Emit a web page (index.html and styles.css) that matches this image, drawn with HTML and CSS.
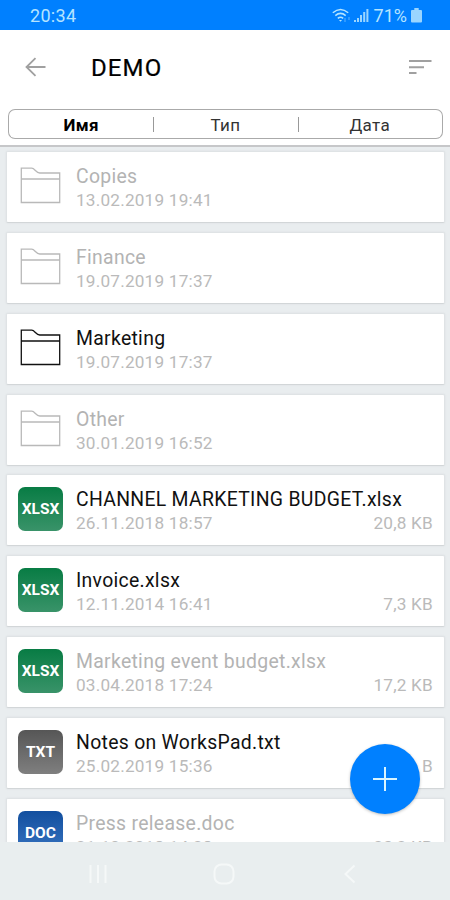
FILE: index.html
```html
<!DOCTYPE html>
<html lang="ru">
<head>
<meta charset="utf-8">
<title>DEMO</title>
<link rel="stylesheet" href="styles.css">
</head>
<body>
<svg width="0" height="0" class="defs"><symbol id="folder" viewBox="0 0 40 37"><path d="M.8 35.500V1.200h10.400c3 0 4.500 4.800 8 4.800h20v29.500zM.8 12h38.400" fill="none" stroke="currentColor" stroke-width="1.300"/></symbol></svg>
<div class="phone">
  <div class="status">
    <span class="time">20:34</span>
    <svg class="wifi" width="19" height="16" viewBox="0 0 19 16" fill="none" stroke="currentColor" stroke-width="1.500"><path d="M.8 4.800q7.700-6.600 15.400 0M3.300 7.600q5.200-4.400 10.400 0M5.800 10.300q2.700-2.200 5.400 0"/><path d="M7 12h3l-1.500 1.800z" fill="currentColor" stroke="none"/><path d="M13 10v4M17 9v3" stroke-width="1" opacity=".5"/></svg>
    <svg class="signal" width="15" height="15" viewBox="0 0 15 15" fill="currentColor"><path d="M0 12h2v2H0zM3 10h2v4H3zM6 7h2v7H6zM9.200 4h2v10h-2zM12.400 1h2v13h-2z" opacity=".85"/></svg>
    <span class="percent">71%</span>
    <svg class="battery" width="11" height="15" viewBox="0 0 11 15" fill="currentColor"><path d="M3.300 0h4.400v2H10q1 0 1 1v10.500q0 1-1 1H1q-1 0-1-1V3q0-1 1-1h2.300z" opacity=".85"/></svg>
  </div>
  <header class="top">
    <svg class="back" width="22" height="20" viewBox="0 0 22 20" fill="none" stroke="currentColor" stroke-width="1.800"><path d="M20.500 10H1.500M10.500 1.200 1.500 10l9 8.800"/></svg>
    <h1>DEMO</h1>
    <svg class="sort" width="23" height="16" viewBox="0 0 23 16" fill="none" stroke="currentColor" stroke-width="2"><path d="M0 2h22.500M0 8.200h15M0 14h7.500"/></svg>
  </header>
  <div class="tabs"><span class="tab active">Имя</span><span class="tab">Тип</span><span class="tab">Дата</span></div>
  <main class="list">
    <div class="card muted"><svg class="folder"><use href="#folder"/></svg><div class="info"><div class="name">Copies</div><div class="meta"><span>13.02.2019 19:41</span></div></div></div>
    <div class="card muted"><svg class="folder"><use href="#folder"/></svg><div class="info"><div class="name">Finance</div><div class="meta"><span>19.07.2019 17:37</span></div></div></div>
    <div class="card"><svg class="folder"><use href="#folder"/></svg><div class="info"><div class="name">Marketing</div><div class="meta"><span>19.07.2019 17:37</span></div></div></div>
    <div class="card muted"><svg class="folder"><use href="#folder"/></svg><div class="info"><div class="name">Other</div><div class="meta"><span>30.01.2019 16:52</span></div></div></div>
    <div class="card"><div class="file xlsx">XLSX</div><div class="info"><div class="name">CHANNEL MARKETING BUDGET.xlsx</div><div class="meta"><span>26.11.2018 18:57</span><span class="size">20,8 KB</span></div></div></div>
    <div class="card"><div class="file xlsx">XLSX</div><div class="info"><div class="name">Invoice.xlsx</div><div class="meta"><span>12.11.2014 16:41</span><span class="size">7,3 KB</span></div></div></div>
    <div class="card muted"><div class="file xlsx">XLSX</div><div class="info"><div class="name">Marketing event budget.xlsx</div><div class="meta"><span>03.04.2018 17:24</span><span class="size">17,2 KB</span></div></div></div>
    <div class="card"><div class="file txt">TXT</div><div class="info"><div class="name">Notes on WorksPad.txt</div><div class="meta"><span>25.02.2019 15:36</span><span class="size">B</span></div></div></div>
    <div class="card muted"><div class="file doc">DOC</div><div class="info"><div class="name">Press release.doc</div><div class="meta"><span>21.10.2018 14:28</span><span class="size">23,2 KB</span></div></div></div>
  </main>
  <nav class="nav">
    <svg width="18" height="20" viewBox="0 0 18 20"><path d="M1.500 1v18M9 1v18M16.500 1v18"/></svg>
    <svg class="home" width="22" height="22" viewBox="0 0 22 22"><rect x="1.500" y="1.500" width="19" height="19" rx="7"/></svg>
    <svg width="12" height="20" viewBox="0 0 12 20"><path d="M10.500 1.500 1.500 10l9 8.500"/></svg>
  </nav>
  <button class="fab" aria-label="+"><svg width="26" height="26" viewBox="0 0 26 26" stroke="currentColor" stroke-width="2"><path d="M13 1v24M1 13h24"/></svg></button>
</div>
</body>
</html>
```
FILE: styles.css
```css
* { box-sizing: border-box; }
body { margin: 0; font-family: Roboto, "Liberation Sans", sans-serif; }
svg { display: block; flex: none; }
.defs { position: absolute; }
.phone { position: relative; width: 450px; height: 900px; overflow: hidden; display: flex; flex-direction: column; background: #e9edef; }
.status { height: 30px; flex: none; background: #0080ff; color: #b5e4ff; display: flex; align-items: center; padding: 1px 28px 0 30px; font-size: 18px; }
.time { margin-right: auto; letter-spacing: .3px; }
.wifi { margin-right: 2px; }
.signal { margin: 0 6px 0 1px; }
.percent { letter-spacing: 0; margin-left: -1px; }
.battery { margin-left: 4px; }
.top { height: 79px; flex: none; background: #fff; display: flex; align-items: center; padding: 0 18px 6px 25px; color: #a0a0a0; }
.top h1 { margin: 2px auto 0 44px; color: #000; font-size: 24px; font-weight: 400; letter-spacing: 1.1px; -webkit-text-stroke: .2px #000; }
.tabs { flex: none; height: 38px; background: #fff; border-bottom: 2px solid #c6c7c9; display: flex; padding: 0 7px 6px 8px; }
.tab { flex: 1; border: 1px solid #aaa; border-width: 1px 0; display: flex; align-items: center; justify-content: center; font-size: 17px; color: #333; position: relative; padding-top: 2px; letter-spacing: .4px; }
.tab:first-child { border-left-width: 1px; border-radius: 7px 0 0 7px; }
.tab:last-child { border-right-width: 1px; border-radius: 0 7px 7px 0; }
.tab + .tab::before { content: ""; position: absolute; left: 0; top: 7px; height: 15px; width: 1px; background: #999; }
.active { font-weight: 700; color: #000; }
.list { flex: 1; min-height: 0; overflow: hidden; padding: 4px 5px 0 6px; display: flex; flex-direction: column; gap: 8.850px; }
.card { height: 72px; flex: none; background: #fff; border: 1px solid #dfe3e5; border-bottom-color: #d2d6d8; border-radius: 2px; box-shadow: 0 0 2px #d9dddf; display: flex; padding: 0 11px; color: #111; }
.folder { width: 41px; height: 37px; margin: 15px 15px 0 2px; color: #111; }
.muted .folder { color: #b9b9b9; }
.file { width: 45px; height: 44px; flex: none; margin: 12px 13px 0 0; border-radius: 7px; color: #fff; font-size: 15.500px; font-weight: 700; display: flex; align-items: center; justify-content: center; }
.xlsx { background: linear-gradient(#087c44, #399369); }
.txt { background: linear-gradient(#565656, #7f7f7f); }
.doc { background: linear-gradient(#124f9f, #3975c1); }
.info { flex: 1; padding-top: 13px; }
.name { font-size: 19.400px; line-height: 24px; letter-spacing: .3px; white-space: nowrap; }
.muted .name { color: #b3b3b3; }
.meta { margin-top: -1px; display: flex; justify-content: space-between; font-size: 17.200px; line-height: 24px; color: #bababa; letter-spacing: .2px; }
.nav { height: 58px; flex: none; background: #e9eeef; display: flex; align-items: center; justify-content: space-between; padding: 5px 94px 0 89px; fill: none; stroke: #f5f8f8; stroke-width: 2; }
.home { margin-right: 3px; }
.fab { position: absolute; left: 350px; top: 744px; width: 70px; height: 70px; border: 0; border-radius: 50%; background: #0080ff; color: #d9f5ff; display: flex; align-items: center; justify-content: center; box-shadow: 0 1px 3px rgba(0, 0, 0, .25); padding: 0; }
```
